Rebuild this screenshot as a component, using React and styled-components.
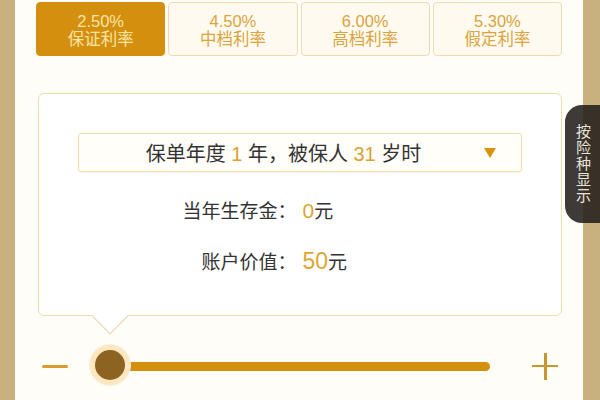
import React from "react";
import styled, { createGlobalStyle } from "styled-components";

const Global = createGlobalStyle`
  * { box-sizing: border-box; }
  html, body { margin: 0; padding: 0; background: #fffdf8; }
  body { font-family: "Liberation Sans", "Noto Sans CJK SC", sans-serif; }
`;

const Page = styled.div`
  position: relative;
  display: flex;
  width: 600px;
  height: 400px;
  overflow: hidden;
  background: #fffdf8;
`;

const Rail = styled.div`
  flex: 0 0 ${(p) => p.$w}px;
  background: #c9b17f;
`;

const Content = styled.div`
  flex: 1;
  padding: 2px 21px 0 21px;
  display: flex;
  flex-direction: column;
`;

const Tabs = styled.div`
  display: grid;
  grid-template-columns: repeat(4, 1fr);
  gap: 3px;
  height: 54px;
`;

const Tab = styled.div`
  display: flex;
  flex-direction: column;
  align-items: center;
  justify-content: center;
  border-radius: 4px;
  font-size: 16.5px;
  line-height: 18px;
  background: ${(p) => (p.$active ? "#d58f0e" : "#fefaf0")};
  border: 1px solid ${(p) => (p.$active ? "#d58f0e" : "#eddcb0")};
  color: ${(p) => (p.$active ? "#fce4a4" : "#dba43c")};
  padding-top: 2px;
`;

const Card = styled.div`
  position: relative;
  margin: 37px 0 0 2px;
  height: 223px;
  background: #fff;
  border: 1px solid #efdcaa;
  border-radius: 6px;
  padding: 39px 39px 0 39px;
`;

const Pointer = styled.div`
  position: absolute;
  left: 58px;
  bottom: -14px;
  width: 26px;
  height: 26px;
  background: #fff;
  border-right: 1px solid #e6d7b4;
  border-bottom: 1px solid #e6d7b4;
  transform: rotate(45deg);
`;

const Select = styled.div`
  display: flex;
  align-items: center;
  height: 39px;
  border: 1px solid #efdfae;
  border-radius: 3px;
  background: #fffef9;
  box-shadow: 0 1px 2px rgba(220, 190, 120, 0.15);
  padding: 0 25px 0 0;
  color: #333;
  font-size: 20px;
`;

const SelectText = styled.div`
  flex: 1;
  text-align: center;
  white-space: pre;
  padding-left: 4px;
`;

const Hi = styled.span`
  color: #dba235;
`;

const Arrow = styled.span`
  width: 0;
  height: 0;
  border-left: 6px solid transparent;
  border-right: 6px solid transparent;
  border-top: 10px solid #d8940f;
`;

const Rows = styled.div`
  margin-top: 26px;
  display: flex;
  flex-direction: column;
  gap: 23px;
`;

const Row = styled.div`
  display: grid;
  grid-template-columns: 1fr 1fr;
  column-gap: 6px;
  align-items: baseline;
  line-height: 26px;
  margin-left: -1px;
`;

const Label = styled.span`
  text-align: right;
  font-size: 19px;
  color: #333;
`;

const Value = styled.span`
  font-size: 19px;
  color: #333;
`;

const Num = styled.span`
  font-size: ${(p) => p.$size}px;
  color: #e0a632;
`;

const SliderRow = styled.div`
  display: flex;
  align-items: center;
  height: 40px;
  margin-top: 30px;
`;

const Minus = styled.span`
  width: 26px;
  height: 3px;
  margin-left: 6px;
  background: #d79c2e;
  border-radius: 2px;
`;

const Track = styled.div`
  position: relative;
  flex: 1;
  height: 40px;
  margin: 0 42px 0 22px;
  display: flex;
  align-items: center;
`;

const Bar = styled.div`
  margin-left: 20px;
  flex: 1;
  height: 9px;
  border-radius: 5px;
  background: #d4900c;
`;

const Thumb = styled.div`
  position: absolute;
  left: 5px;
  top: 4px;
  width: 30px;
  height: 30px;
  border-radius: 50%;
  background: #8c6321;
  box-shadow: 0 0 0 5px #fce7c2, 0 0 0 6px #fdf0d8;
`;

const Plus = styled.span`
  position: relative;
  width: 26px;
  height: 27px;
  margin-right: 4px;
  &::before, &::after {
    content: "";
    position: absolute;
    background: #c9962e;
  }
  &::before { left: 0; right: 0; top: 12px; height: 2.5px; }
  &::after { top: 0; bottom: 0; left: 12px; width: 2.5px; }
`;

const SideTab = styled.div`
  position: absolute;
  right: 0;
  top: 105px;
  width: 35px;
  height: 118px;
  border-radius: 17px 0 0 17px;
  background: rgba(34, 31, 28, 0.88);
  color: #e9e3d8;
  display: flex;
  align-items: center;
  justify-content: center;
  font-family: "Noto Sans CJK SC", sans-serif;
  font-size: 15px;
  writing-mode: vertical-rl;
  text-orientation: upright;
  letter-spacing: 1px;
  padding-left: 2px;
`;

const tabs = [
  { rate: "2.50%", name: "保证利率", active: true },
  { rate: "4.50%", name: "中档利率" },
  { rate: "6.00%", name: "高档利率" },
  { rate: "5.30%", name: "假定利率" },
];

export default function App() {
  return (
    <Page>
      <Global />
      <Rail $w={15} />
      <Content>
        <Tabs>
          {tabs.map((t) => (
            <Tab key={t.rate} $active={t.active}>
              <span>{t.rate}</span>
              <span>{t.name}</span>
            </Tab>
          ))}
        </Tabs>
        <Card>
          <Select>
            <SelectText>
              保单年度 <Hi>1</Hi> 年，被保人 <Hi>31</Hi> 岁时
            </SelectText>
            <Arrow />
          </Select>
          <Rows>
            <Row>
              <Label>当年生存金：</Label>
              <Value>
                <Num $size={21}>0</Num>元
              </Value>
            </Row>
            <Row>
              <Label>账户价值：</Label>
              <Value>
                <Num $size={23}>50</Num>元
              </Value>
            </Row>
          </Rows>
          <Pointer />
        </Card>
        <SliderRow>
          <Minus />
          <Track>
            <Bar />
            <Thumb />
          </Track>
          <Plus />
        </SliderRow>
      </Content>
      <Rail $w={17} />
      <SideTab>按险种显示</SideTab>
    </Page>
  );
}
